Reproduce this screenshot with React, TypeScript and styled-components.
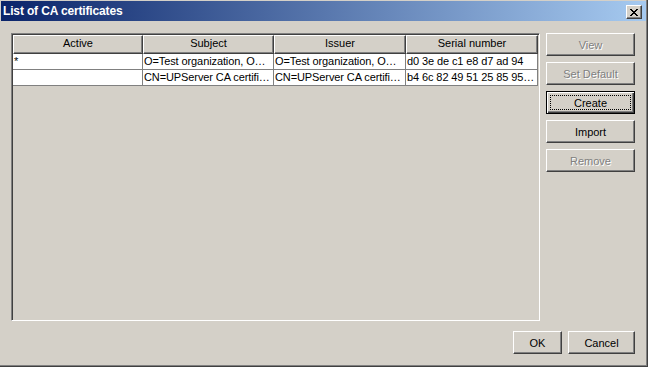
import React from "react";
import styled, { createGlobalStyle, css } from "styled-components";

const GlobalStyle = createGlobalStyle`
  html, body {
    margin: 0;
    padding: 0;
    background: #d4d0c8;
  }
  body {
    font-family: "Liberation Sans", Arial, sans-serif;
    font-size: 11px;
    color: #000;
  }
`;

const Window = styled.div`
  width: 648px;
  height: 367px;
  box-sizing: border-box;
  background: #d4d0c8;
  border-right: 1px solid #404040;
  border-bottom: 1px solid #404040;
  box-shadow: inset -1px -1px #808080;
  padding: 1px 1px 0 1px;
  display: flex;
  flex-direction: column;
`;

const TitleBar = styled.div`
  height: 20px;
  flex: none;
  display: flex;
  align-items: center;
  justify-content: space-between;
  padding-left: 2px;
  background: linear-gradient(to right, #0a246a, #a6caf0);
`;

const TitleText = styled.span`
  color: #fff;
  font-weight: bold;
  font-size: 12px;
  letter-spacing: -0.15px;
`;

const CloseButton = styled.div`
  width: 16px;
  height: 14px;
  box-sizing: border-box;
  margin: 2px 4px 0 0;
  background: #d4d0c8;
  border: 1px solid;
  border-color: #fff #404040 #404040 #fff;
  box-shadow: inset -1px -1px #808080;
  display: flex;
  align-items: center;
  justify-content: center;
`;

const Body = styled.div`
  flex: 1;
  display: flex;
  flex-direction: column;
  padding: 12px 11px 0 10px;
`;

const Main = styled.div`
  height: 288px;
  display: flex;
  gap: 6px;
`;

const ListView = styled.div`
  flex: 1;
  box-sizing: border-box;
  border: 1px solid;
  border-color: #808080 #fff #fff #808080;
  box-shadow: inset 1px 1px #404040, inset -1px -1px #d4d0c8;
  padding: 1px;
  background: #d4d0c8;
  overflow: hidden;
`;

const HeaderRow = styled.div`
  display: flex;
  height: 19px;
`;

const HeaderCell = styled.div<{ $w: number }>`
  width: ${(p) => p.$w}px;
  flex: none;
  box-sizing: border-box;
  border-top: 1px solid #fff;
  border-left: 1px solid #fff;
  border-right: 1px solid #404040;
  border-bottom: 1px solid #404040;
  box-shadow: inset -1px -1px #808080;
  text-align: center;
  line-height: 15px;
  white-space: nowrap;
  overflow: hidden;
`;

const Row = styled.div`
  display: flex;
  height: 16px;
`;

const Cell = styled.div<{ $w: number }>`
  width: ${(p) => p.$w}px;
  flex: none;
  box-sizing: border-box;
  background: #fff;
  border-right: 1px solid #808080;
  border-bottom: 1px solid #808080;
  padding: 0 1px;
  line-height: 15px;
  white-space: nowrap;
  overflow: hidden;
  text-overflow: ellipsis;
  letter-spacing: -0.1px;
`;

const ButtonColumn = styled.div`
  width: 89px;
  flex: none;
  display: flex;
  flex-direction: column;
  gap: 6px;
`;

const Button = styled.div<{ $disabled?: boolean; $default?: boolean; $w?: number }>`
  position: relative;
  height: 23px;
  width: ${(p) => (p.$w ? `${p.$w}px` : "100%")};
  box-sizing: border-box;
  background: #d4d0c8;
  border: 1px solid;
  border-color: #fff #404040 #404040 #fff;
  box-shadow: inset -1px -1px #808080;
  display: flex;
  align-items: center;
  justify-content: center;
  font-size: 11px;
  color: #000;
  ${(p) =>
    p.$disabled &&
    css`
      color: #808080;
      text-shadow: 1px 1px #fff;
    `}
  ${(p) =>
    p.$default &&
    css`
      border-color: #000;
      box-shadow: inset 1px 1px #fff, inset -1px -1px #404040,
        inset -2px -2px #808080;
      &::after {
        content: "";
        position: absolute;
        inset: 3px;
        border: 1px dotted #000;
      }
    `}
`;

const Footer = styled.div`
  display: flex;
  justify-content: flex-end;
  gap: 6px;
  margin-top: 10px;
`;

const columns = [
  { title: "Active", w: 130 },
  { title: "Subject", w: 131 },
  { title: "Issuer", w: 132 },
  { title: "Serial number", w: 132 },
];

const certificates = [
  ["*", "O=Test organization, O…", "O=Test organization, O…", "d0 3e de c1 e8 d7 ad 94"],
  ["", "CN=UPServer CA certifi…", "CN=UPServer CA certifi…", "b4 6c 82 49 51 25 85 95…"],
];

const CloseGlyph = () => (
  <svg width="8" height="7" viewBox="0 0 8 7" shapeRendering="crispEdges">
    <path
      fill="#000"
      d="M0 0h2v1H0zM6 0h2v1H6zM1 1h2v1H1zM5 1h2v1H5zM2 2h4v1H2zM3 3h2v1H3zM2 4h4v1H2zM1 5h2v1H1zM5 5h2v1H5zM0 6h2v1H0zM6 6h2v1H6z"
    />
  </svg>
);

export default function App() {
  return (
    <>
      <GlobalStyle />
      <Window>
        <TitleBar>
          <TitleText>List of CA certificates</TitleText>
          <CloseButton>
            <CloseGlyph />
          </CloseButton>
        </TitleBar>
        <Body>
          <Main>
            <ListView>
              <HeaderRow>
                {columns.map((c) => (
                  <HeaderCell key={c.title} $w={c.w}>
                    {c.title}
                  </HeaderCell>
                ))}
              </HeaderRow>
              {certificates.map((row, i) => (
                <Row key={i}>
                  {row.map((v, j) => (
                    <Cell key={j} $w={columns[j].w}>
                      {v}
                    </Cell>
                  ))}
                </Row>
              ))}
            </ListView>
            <ButtonColumn>
              <Button $disabled>View</Button>
              <Button $disabled>Set Default</Button>
              <Button $default>Create</Button>
              <Button>Import</Button>
              <Button $disabled>Remove</Button>
            </ButtonColumn>
          </Main>
          <Footer>
            <Button $w={49}>OK</Button>
            <Button $w={67}>Cancel</Button>
          </Footer>
        </Body>
      </Window>
    </>
  );
}
